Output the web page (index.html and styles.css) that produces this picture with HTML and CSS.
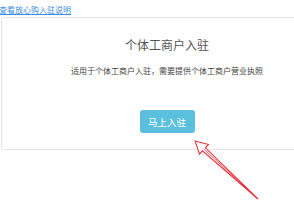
FILE: index.html
```html
<!DOCTYPE html>
<html>
<head>
<meta charset="utf-8">
<link rel="stylesheet" href="styles.css">
</head>
<body>
<div class="page">
  <a class="guide" href="#">查看放心购入驻说明</a>
  <div class="card">
    <div class="title">个体工商户入驻</div>
    <div class="desc">适用于个体工商户入驻，需要提供个体工商户营业执照</div>
    <button class="join">马上入驻</button>
  </div>
  <svg class="arrow" width="294" height="221" viewBox="0 0 294 221">
    <polygon points="195,141 208.5,144.5 205.4,147.8 258,199 202.4,150.8 199.5,154.2" fill="#fff" stroke="#f2323c" stroke-width="1.1" stroke-linejoin="miter"/>
    <line x1="204" y1="149.2" x2="258" y2="199" stroke="#e0283a" stroke-width="0.7"/>
  </svg>
</div>
</body>
</html>
```
FILE: styles.css
```css
html, body {
  margin: 0;
  padding: 0;
  background: #fff;
  font-family: "Noto Sans CJK SC", "Noto Sans", sans-serif;
}
.page {
  position: relative;
  width: 294px;
  height: 221px;
  overflow: hidden;
}
.guide {
  display: block;
  margin-left: -1px;
  padding-top: 4px;
  height: 13px;
  font-size: 8px;
  line-height: 11px;
  color: #3d8de0;
  text-decoration: underline;
  white-space: nowrap;
}
.card {
  margin-left: 1px;
  width: 332px;
  border: 1px solid #e4e4e4;
  border-radius: 2px;
  box-sizing: border-box;
  padding: 20px 0 16px;
  text-align: center;
  display: flex;
  flex-direction: column;
  align-items: center;
}
.title {
  font-size: 12px;
  line-height: 14px;
  color: #555;
}
.desc {
  margin-top: 14px;
  font-size: 8px;
  line-height: 10px;
  color: #444;
}
.join {
  margin-top: 34px;
  width: 55px;
  height: 23px;
  border: none;
  border-radius: 3px;
  background: #5bc0de;
  color: #fff;
  font-family: inherit;
  font-size: 9.5px;
  padding: 0;
}
.arrow {
  position: absolute;
  left: 0;
  top: 0;
  pointer-events: none;
}
```
